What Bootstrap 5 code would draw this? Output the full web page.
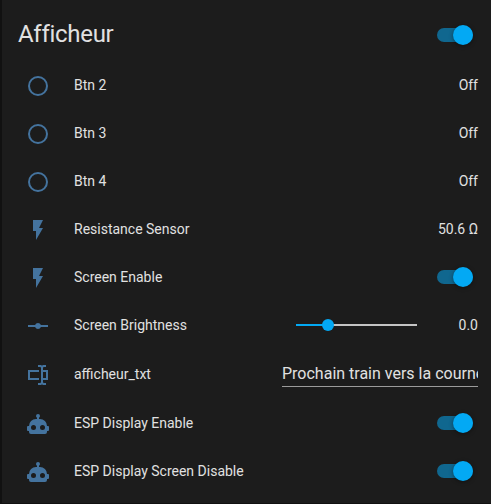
<!DOCTYPE html>
<html lang="fr">
<head>
<meta charset="utf-8">
<meta name="viewport" content="width=device-width, initial-scale=1">
<title>Afficheur</title>
<link href="https://cdn.jsdelivr.net/npm/bootstrap@5.3.0/dist/css/bootstrap.min.css" rel="stylesheet">
<style>
  body { background: #111; color: #e1e1e1; font: 400 14px/20px Roboto, sans-serif; overflow: hidden; }
  .entities { background: #1c1c1c; height: 503px; margin-left: 2px; padding: 0 13px 0 16px; }
  .entities-head { height: 66px; padding-top: 4px; }
  .entities-title { font-size: 24px; line-height: 60px; font-weight: 400; letter-spacing: -.012em; }
  .entity { height: 40px; }
  .entity-input { height: 42px; }
  .entity-icon { width: 24px; height: 24px; margin: 0 24px 0 8px; fill: #44739e; }
  .entity-name, .entity-value { margin-bottom: 2px; }
  .toggle { width: 36px; height: 20px; margin: 0 5px 2px 0; padding: 3px 0; }
  .entities-head .toggle { margin-top: 21px; }
  .toggle-track { width: 36px; height: 14px; border-radius: 7px; background: #10678f; }
  .toggle-thumb { position: absolute; right: 0; top: 0; width: 20px; height: 20px; border-radius: 50%; background: #03a9f4; box-shadow: 0 1px 4px rgba(0,0,0,.4); }
  .slider { width: 121px; height: 12px; margin-bottom: 2px; }
  .slider-fill { width: 32px; height: 2px; background: #03a9f4; }
  .slider-rest { height: 2px; background: #c4c4c4; }
  .slider-knob { position: absolute; left: 26px; top: 0; width: 12px; height: 12px; border-radius: 50%; background: #03a9f4; }
  .slider-value { width: 61px; }
  .text-input { width: 196px; height: 25px; margin-bottom: 2px; font-size: 16px; line-height: 24px; border-bottom: 1px solid #9b9b9b; }
</style>
<script src="https://cdn.jsdelivr.net/npm/bootstrap@5.3.0/dist/js/bootstrap.bundle.min.js"></script>
</head>
<body>
<svg class="d-none">
  <symbol id="circle" viewBox="0 0 24 24"><path d="M12,20A8,8 0 0,1 4,12A8,8 0 0,1 12,4A8,8 0 0,1 20,12A8,8 0 0,1 12,20M12,2A10,10 0 0,0 2,12A10,10 0 0,0 12,22A10,10 0 0,0 22,12A10,10 0 0,0 12,2Z"/></symbol>
  <symbol id="flash" viewBox="0 0 24 24"><path d="M7,2V13H10V22L17,10H13L17,2H7Z"/></symbol>
  <symbol id="ray" viewBox="0 0 24 24"><path d="M2,11H9.17C9.58,9.83 10.69,9 12,9C13.31,9 14.42,9.83 14.83,11H22V13H14.83C14.42,14.17 13.31,15 12,15C10.69,15 9.58,14.17 9.17,13H2V11Z"/></symbol>
  <symbol id="textbox" viewBox="0 0 24 24"><path d="M17,7H22V17H17V19A1,1 0 0,0 18,20H20V22H17.5C16.95,22 16,21.55 16,21C16,21.55 15.05,22 14.5,22H12V20H14A1,1 0 0,0 15,19V5A1,1 0 0,0 14,4H12V2H14.5C15.05,2 16,2.45 16,3C16,2.45 16.95,2 17.5,2H20V4H18A1,1 0 0,0 17,5V7M2,7H13V9H4V15H13V17H2V7M20,15V9H17V15H20Z"/></symbol>
  <symbol id="robot" viewBox="0 0 24 24"><path d="M12,2A2,2 0 0,1 14,4C14,4.74 13.6,5.39 13,5.73V7H14A7,7 0 0,1 21,14H22A1,1 0 0,1 23,15V18A1,1 0 0,1 22,19H21V20A2,2 0 0,1 19,22H5A2,2 0 0,1 3,20V19H2A1,1 0 0,1 1,18V15A1,1 0 0,1 2,14H3A7,7 0 0,1 10,7H11V5.73C10.4,5.39 10,4.74 10,4A2,2 0 0,1 12,2M7.5,13A2.5,2.5 0 0,0 5,15.5A2.5,2.5 0 0,0 7.5,18A2.5,2.5 0 0,0 10,15.5A2.5,2.5 0 0,0 7.5,13M16.5,13A2.5,2.5 0 0,0 14,15.5A2.5,2.5 0 0,0 16.5,18A2.5,2.5 0 0,0 19,15.5A2.5,2.5 0 0,0 16.5,13Z"/></symbol>
</svg>
<main class="entities">
  <header class="entities-head d-flex justify-content-between align-items-start">
    <h1 class="entities-title m-0">Afficheur</h1>
    <div class="toggle position-relative"><div class="toggle-track"></div><div class="toggle-thumb"></div></div>
  </header>
  <div class="d-flex flex-column gap-2">
    <div class="entity d-flex align-items-center"><svg class="entity-icon"><use href="#circle"/></svg><span class="entity-name flex-grow-1">Btn 2</span><span class="entity-value">Off</span></div>
    <div class="entity d-flex align-items-center"><svg class="entity-icon"><use href="#circle"/></svg><span class="entity-name flex-grow-1">Btn 3</span><span class="entity-value">Off</span></div>
    <div class="entity d-flex align-items-center"><svg class="entity-icon"><use href="#circle"/></svg><span class="entity-name flex-grow-1">Btn 4</span><span class="entity-value">Off</span></div>
    <div class="entity d-flex align-items-center"><svg class="entity-icon"><use href="#flash"/></svg><span class="entity-name flex-grow-1">Resistance Sensor</span><span class="entity-value">50.6 Ω</span></div>
    <div class="entity d-flex align-items-center"><svg class="entity-icon"><use href="#flash"/></svg><span class="entity-name flex-grow-1">Screen Enable</span><div class="toggle position-relative"><div class="toggle-track"></div><div class="toggle-thumb"></div></div></div>
    <div class="entity d-flex align-items-center"><svg class="entity-icon"><use href="#ray"/></svg><span class="entity-name flex-grow-1">Screen Brightness</span>
      <div class="slider position-relative d-flex align-items-center"><div class="slider-fill"></div><div class="slider-rest flex-grow-1"></div><div class="slider-knob"></div></div>
      <span class="entity-value slider-value text-end">0.0</span></div>
    <div class="entity entity-input d-flex align-items-center"><svg class="entity-icon"><use href="#textbox"/></svg><span class="entity-name flex-grow-1">afficheur_txt</span><div class="text-input overflow-hidden text-nowrap">Prochain train vers la courne</div></div>
    <div class="entity d-flex align-items-center"><svg class="entity-icon"><use href="#robot"/></svg><span class="entity-name flex-grow-1">ESP Display Enable</span><div class="toggle position-relative"><div class="toggle-track"></div><div class="toggle-thumb"></div></div></div>
    <div class="entity d-flex align-items-center"><svg class="entity-icon"><use href="#robot"/></svg><span class="entity-name flex-grow-1">ESP Display Screen Disable</span><div class="toggle position-relative"><div class="toggle-track"></div><div class="toggle-thumb"></div></div></div>
  </div>
</main>
</body>
</html>
